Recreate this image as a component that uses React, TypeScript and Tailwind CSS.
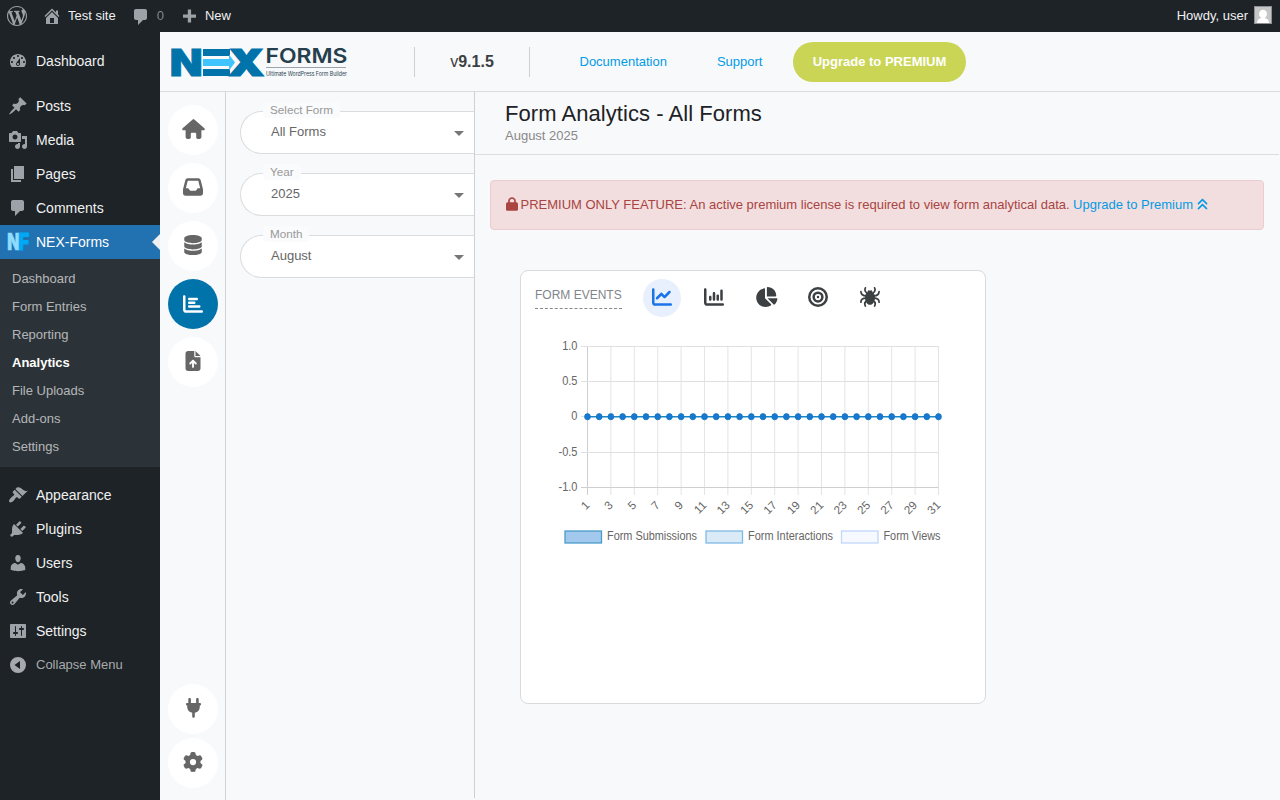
import React from 'react';
import {
  FaAnglesUp,
  FaBullseye,
  FaChartBar,
  FaChartColumn,
  FaChartLine,
  FaChartPie,
  FaDatabase,
  FaFileArrowUp,
  FaGear,
  FaInbox,
  FaLock,
} from 'react-icons/fa6';

const dash = {
  wordpress:
    'M20 10c0-5.51-4.49-10-10-10C4.48 0 0 4.49 0 10c0 5.52 4.48 10 10 10 5.51 0 10-4.48 10-10zM7.78 15.37L4.37 6.22c.55-.02 1.17-.08 1.17-.08.5-.06.44-1.13-.06-1.11 0 0-1.45.11-2.37.11-.18 0-.37 0-.58-.01C4.12 2.69 6.87 1.11 10 1.11c2.33 0 4.45.87 6.05 2.34-.68-.11-1.65.39-1.65 1.58 0 .74.45 1.36.9 2.1.35.61.55 1.36.55 2.46 0 1.49-1.4 5-1.4 5l-3.03-8.37c.54-.02.82-.17.82-.17.5-.05.44-1.25-.06-1.22 0 0-1.44.12-2.38.12-.87 0-2.33-.12-2.33-.12-.5-.03-.56 1.2-.06 1.22l.92.08 1.26 3.41zM17.41 10c.24-.64.74-1.87.43-4.25.7 1.29 1.05 2.71 1.05 4.25 0 3.29-1.73 6.24-4.4 7.78.97-2.59 1.94-5.2 2.92-7.78zM6.1 18.09C3.12 16.65 1.11 13.53 1.11 10c0-1.3.23-2.48.72-3.59C3.25 10.3 4.67 14.2 6.1 18.09zm4.03-6.63l2.58 6.98c-.86.29-1.76.45-2.71.45-.79 0-1.57-.11-2.29-.33.81-2.38 1.62-4.74 2.42-7.1z',
  home: 'M16 8.5l1.53 1.53-1.06 1.06L10 4.6l-6.47 6.49-1.06-1.06L10 2.5l4 4v-2h2v4zm-6-2.46l6 5.99V18H4v-5.97zM12 17v-5H8v5h4z',
  comments: 'M5 2h9c1.1 0 2 .9 2 2v7c0 1.1-.9 2-2 2h-2l-5 5v-5H5c-1.1 0-2-.9-2-2V4c0-1.1.9-2 2-2z',
  plus: 'M17 8.4v3.3h-4.9v4.9H8.8v-4.9H4V8.4h4.8V3.5h3.3v4.9H17z',
  dashboard:
    'M3.76 16h12.48c1.1-1.37 1.76-3.11 1.76-5 0-4.42-3.58-8-8-8s-8 3.58-8 8c0 1.89.66 3.63 1.76 5zM10 4c.55 0 1 .45 1 1s-.45 1-1 1-1-.45-1-1 .45-1 1-1zM6 6c.55 0 1 .45 1 1s-.45 1-1 1-1-.45-1-1 .45-1 1-1zm8 0c.55 0 1 .45 1 1s-.45 1-1 1-1-.45-1-1 .45-1 1-1zm-5.37 5.55L12 7v6c0 1.1-.9 2-2 2s-2-.9-2-2c0-.57.24-1.08.63-1.45zM4 10c.55 0 1 .45 1 1s-.45 1-1 1-1-.45-1-1 .45-1 1-1zm12 0c.55 0 1 .45 1 1s-.45 1-1 1-1-.45-1-1 .45-1 1-1zm-5 3c0-.55-.45-1-1-1s-1 .45-1 1 .45 1 1 1 1-.45 1-1z',
  post: 'M10.44 3.02l1.82-1.82 6.36 6.35-1.83 1.82c-1.05-.68-2.48-.57-3.41.36l-.75.75c-.92.93-1.04 2.35-.35 3.41l-1.83 1.82-2.41-2.41-2.8 2.79c-.42.42-3.38 2.71-3.8 2.29s1.86-3.39 2.28-3.81l2.79-2.79L4.1 9.36l1.83-1.82c1.05.69 2.48.57 3.4-.36l.75-.75c.93-.92 1.05-2.35.36-3.41z',
  media:
    'M13 11V4c0-.55-.45-1-1-1h-1.67L9 1H5L3.67 3H2c-.55 0-1 .45-1 1v7c0 .55.45 1 1 1h10c.55 0 1-.45 1-1zM7 4.5c1.38 0 2.5 1.12 2.5 2.5S8.38 9.5 7 9.5 4.5 8.38 4.5 7 5.62 4.5 7 4.5zM14 6h5v10.5c0 1.38-1.12 2.5-2.5 2.5S14 17.88 14 16.5s1.12-2.5 2.5-2.5c.17 0 .34.02.5.05V9h-3V6zm-4 8.05V13h2v3.5c0 1.38-1.12 2.5-2.5 2.5S7 17.88 7 16.5 8.12 14 9.5 14c.17 0 .34.02.5.05z',
  page: 'M6 15V2h10v13H6zm-1 1h8v2H3V5h2v11z',
  appearance:
    'M14.48 11.06L7.41 3.99l1.5-1.5c.5-.56 2.3-.47 3.51.32 1.21.8 1.43 1.28 2.91 2.1 1.18.64 2.45 1.26 4.45.85zm-.71.71L6.7 4.7 4.93 6.47c-.39.39-.39 1.02 0 1.41l1.06 1.06c.39.39.39 1.03 0 1.42-.6.6-1.43 1.11-2.21 1.69-.35.26-.7.53-1.01.84C1.43 14.23.4 16.08 1.4 17.07c.99 1 2.84-.03 4.18-1.36.31-.31.58-.66.85-1.02.57-.78 1.08-1.61 1.69-2.21.39-.39 1.02-.39 1.41 0l1.06 1.06c.39.39 1.02.39 1.41 0z',
  plugins:
    'M13.11 4.36L9.87 7.6 8 5.73l3.24-3.24c.35-.34 1.05-.2 1.56.32.52.51.66 1.21.31 1.55zm-8 1.77l.91-1.12 9.01 9.01-1.19.84c-.71.71-2.63 1.16-3.82 1.16H6.14L4.9 17.26c-.59.59-1.54.59-2.12 0-.59-.58-.59-1.53 0-2.12l1.24-1.24v-3.88c0-1.13.4-3.19 1.09-3.89zm7.26 3.97l3.24-3.24c.34-.35 1.04-.21 1.55.31.52.51.66 1.21.31 1.55l-3.24 3.25z',
  users:
    'M10 9.25c-2.27 0-2.73-3.44-2.73-3.44C7 4.02 7.82 2 9.97 2c2.16 0 2.98 2.02 2.71 3.81 0 0-.41 3.44-2.68 3.44zm0 2.57L12.72 10c2.39 0 4.52 2.33 4.52 4.53v2.49s-3.65 1.13-7.24 1.13c-3.65 0-7.24-1.13-7.24-1.13v-2.49c0-2.25 1.94-4.48 4.47-4.48z',
  tools:
    'M16.68 9.77c-1.34 1.34-3.3 1.67-4.95.99l-5.41 6.52c-.99.99-2.59.99-3.58 0s-.99-2.59 0-3.57l6.52-5.42c-.68-1.65-.35-3.61.99-4.95 1.28-1.28 3.12-1.62 4.72-1.06l-2.89 2.89 2.82 2.82 2.86-2.87c.53 1.58.18 3.39-1.08 4.65zM3.81 16.21c.4.39 1.04.39 1.43 0 .4-.4.4-1.04 0-1.43-.39-.4-1.03-.4-1.43 0-.39.39-.39 1.03 0 1.43z',
  settings:
    'M18 16V4c0-.55-.45-1-1-1H3c-.55 0-1 .45-1 1v12c0 .55.45 1 1 1h14c.55 0 1-.45 1-1zM8 11h1c.55 0 1 .45 1 1s-.45 1-1 1H8v1.5c0 .28-.22.5-.5.5s-.5-.22-.5-.5V13H6c-.55 0-1-.45-1-1s.45-1 1-1h1V5.5c0-.28.22-.5.5-.5s.5.22.5.5V11zm5-2h-1c-.55 0-1-.45-1-1s.45-1 1-1h1V5.5c0-.28.22-.5.5-.5s.5.22.5.5V7h1c.55 0 1 .45 1 1s-.45 1-1 1h-1v5.5c0 .28-.22.5-.5.5s-.5-.22-.5-.5V9z',
  collapse: 'M10 2a8 8 0 1 0 0 16 8 8 0 0 0 0-16zm2 4v8l-5.500-4z',
};

type DashName = keyof typeof dash;

const Dashicon: React.FC<{ name: DashName; className?: string }> = ({ name, className = '' }) => (
  <svg viewBox="0 0 20 20" className={`w-5 h-5 shrink-0 ${className}`} fill="currentColor">
    <path fillRule="evenodd" d={dash[name]} />
  </svg>
);

const House = () => (
  <svg viewBox="0 0 23 20" className="w-[23px] h-5" fill="currentColor">
    <path d="M10.700.4a1.200 1.200 0 0 1 1.600 0l10.100 8.900c.8.8.3 2-.8 2h-2.200v6.800c0 1.100-.8 1.900-1.900 1.900h-1.600c-1 0-1.700-.7-1.700-1.700v-3.200c0-.8-.5-1.300-1.300-1.300h-2.800c-.8 0-1.300.5-1.300 1.300v3.200c0 1-.7 1.700-1.700 1.700H5.500c-1.100 0-1.900-.8-1.900-1.900v-6.800H1.400c-1.100 0-1.600-1.200-.8-2z" />
  </svg>
);

const Plug = () => (
  <svg viewBox="0 0 15 20" className="w-[15px] h-5" fill="currentColor">
    <path d="M2.300 5V1.200a1.300 1.300 0 0 1 2.600 0V5zM10.100 5V1.200a1.300 1.300 0 0 1 2.600 0V5z" />
    <rect y="5" width="15" height="2.400" rx="1" />
    <path d="M1.200 7h12.600v1.700a6.300 6.300 0 0 1-5 6.100v3.600a1.300 1.300 0 0 1-2.600 0v-3.600a6.300 6.300 0 0 1-5-6.100z" />
  </svg>
);

const Spider: React.FC<{ className?: string }> = ({ className = '' }) => (
  <svg viewBox="0 0 20 20" className={className} fill="none" stroke="currentColor" strokeWidth="1.700" strokeLinecap="round">
    <path
      d="M10 3.600c.7 0 1-.6 1.700-.2.7.4.9 1.300.9 2.200 1.700.9 2.500 2.600 2.500 4.600 0 3.900-2.100 7.600-5.100 7.600s-5.100-3.700-5.100-7.600c0-2 .8-3.700 2.500-4.600 0-.9.2-1.800.9-2.200.7-.4 1 .2 1.700.2z"
      fill="currentColor"
      stroke="none"
    />
    <path d="M5.400.9c-1.100 2.500-.3 4.400 2.300 5.900M14.600.9c1.100 2.500.3 4.400-2.300 5.900" />
    <path d="M.9 4.600c.2 2.900 2 4.200 5.300 4.400M19.100 4.600c-.2 2.900-2 4.200-5.300 4.400" />
    <path d="M.9 15.200c0-2.800 2-4 5.300-4M19.100 15.200c0-2.800-2-4-5.300-4" />
    <path d="M5.400 19.100c-1.300-2.300-.7-4.200 1.900-5.900M14.600 19.100c1.300-2.300.7-4.200-1.900-5.900" />
  </svg>
);

const AdminBar = () => (
  <header className="flex h-8 items-center bg-[#1d2327] text-[13px] text-[#f0f0f1] shrink-0">
    <Dashicon name="wordpress" className="ml-[7px] text-[#9ca2a7]" />
    <Dashicon name="home" className="ml-[15px] text-[#9ca2a7]" />
    <span className="ml-1.5">Test site</span>
    <Dashicon name="comments" className="ml-[15px] mt-0.5 text-[#9ca2a7]" />
    <span className="ml-1.5 text-[#9ca2a7]/80">0</span>
    <Dashicon name="plus" className="ml-[15px] text-[#9ca2a7]" />
    <span className="ml-1.5">New</span>
    <span className="ml-auto">Howdy, user</span>
    <svg viewBox="0 0 18 18" className="ml-1.5 mr-2 w-[18px] h-[18px] mb-0.5">
      <rect x="0.5" y="0.5" width="17" height="17" fill="#c6c6c6" stroke="#8c8f94" />
      <ellipse cx="9" cy="8" rx="4" ry="4.300" fill="#fff" />
      <path d="M3 17c0-3 2-4.500 4.500-5h3c2.500.5 4.500 2 4.500 5z" fill="#fff" />
    </svg>
  </header>
);

const MenuItem: React.FC<{ icon: DashName; label: string }> = ({ icon, label }) => (
  <div className="flex h-[34px] items-center gap-2 pl-2 text-sm text-[#f0f0f1]">
    <Dashicon name={icon} className="text-[#9ca2a7]" />
    {label}
  </div>
);

const submenu = ['Dashboard', 'Form Entries', 'Reporting', 'Analytics', 'File Uploads', 'Add-ons', 'Settings'];

const Sidebar = () => (
  <nav className="w-40 shrink-0 bg-[#1d2327] pt-3">
    <MenuItem icon="dashboard" label="Dashboard" />
    <div className="h-[11px]" />
    <MenuItem icon="post" label="Posts" />
    <MenuItem icon="media" label="Media" />
    <MenuItem icon="page" label="Pages" />
    <MenuItem icon="comments" label="Comments" />
    <div className="relative flex h-[34px] items-center bg-[#2271b1] pl-2 text-sm text-white">
      <svg
        viewBox="0 0 22 34"
        className="w-[22px] h-[34px] shrink-0 mr-1.5 overflow-visible font-['Inter','Liberation_Sans',sans-serif] font-black"
      >
        <text fontSize="22.500" fill="#8fdcff" stroke="#8fdcff" strokeWidth="0.6" transform="translate(-0.8 24.600) scale(0.72 1)">N</text>
        <text fontSize="22.500" fill="#00a8f5" stroke="#00a8f5" strokeWidth="1" transform="translate(10.200 24.600) scale(0.84 1)">F</text>
      </svg>
      NEX-Forms
      <div className="absolute right-0 top-[9px] border-y-8 border-r-8 border-y-transparent border-r-[#f0f0f1]" />
    </div>
    <ul className="bg-[#2c3338] py-1.5 text-[13px]">
      {submenu.map((s) => (
        <li
          key={s}
          className={`flex h-7 items-center pl-3 ${s === 'Analytics' ? 'font-bold text-white' : 'text-[#f0f0f1]/70'}`}
        >
          {s}
        </li>
      ))}
    </ul>
    <div className="h-[11px]" />
    <MenuItem icon="appearance" label="Appearance" />
    <MenuItem icon="plugins" label="Plugins" />
    <MenuItem icon="users" label="Users" />
    <MenuItem icon="tools" label="Tools" />
    <MenuItem icon="settings" label="Settings" />
    <div className="flex h-[34px] items-center gap-2 pl-2 text-[13px] text-[#a7aaad]">
      <Dashicon name="collapse" />
      Collapse Menu
    </div>
  </nav>
);

const Logo = () => (
  <svg viewBox="0 -12 178 55" className="w-[178px] h-[55px] shrink-0 overflow-visible">
    <g className="font-['Inter','Liberation_Sans',sans-serif] font-black" fill="#0073aa" stroke="#0073aa">
      <text fontSize="36.500" strokeWidth="0.9" transform="translate(-1.200 29.500) scale(1.17 1)">N</text>
      <text fontSize="36.500" strokeWidth="1.200" transform="translate(57.200 29.500) scale(1.26 1)">X</text>
    </g>
    <rect x="32" y="3" width="27" height="7" fill="#0073aa" />
    <rect x="32" y="23" width="27" height="7" fill="#0073aa" />
    <path d="M32 13h26V8.500l6 8-6 8V20H32z" fill="#40c4ff" />
    <text
      x="94.500"
      y="17"
      fontSize="19.800"
      textLength="82"
      lengthAdjust="spacingAndGlyphs"
      fill="#263f4d"
      className="font-['Inter','Liberation_Sans',sans-serif] font-semibold"
    >
      FORMS
    </text>
    <rect x="95" y="21" width="80" height="1" fill="#9aa4aa" />
    <text
      x="95"
      y="29.500"
      fontSize="5.800"
      textLength="81"
      lengthAdjust="spacingAndGlyphs"
      fill="#263f4d"
      className="font-['Inter','Liberation_Sans',sans-serif]"
    >
      Ultimate WordPress Form Builder
    </text>
  </svg>
);

const TopBar = () => (
  <div className="flex h-[60px] items-center border-b border-[#d9dbdd] pl-[11px] text-[13px] shrink-0">
    <Logo />
    <div className="ml-[65px] flex h-[30px] w-[116px] items-center justify-center border-x border-[#ced1d4] text-base text-[#3c4043]">
      v<strong>9.1.5</strong>
    </div>
    <a className="ml-[49.500px] text-[#039be5]">Documentation</a>
    <a className="ml-[50px] text-[#039be5]">Support</a>
    <button className="ml-[30px] h-10 w-[173px] rounded-full bg-[#cad556] pl-px font-bold text-white">Upgrade to PREMIUM</button>
  </div>
);

const RailButton: React.FC<{ children: React.ReactNode; active?: boolean }> = ({ children, active }) => (
  <div
    className={`flex h-[50px] w-[50px] items-center justify-center rounded-full text-xl ${
      active ? 'bg-[#0073aa] text-white' : 'bg-white pb-0.5 text-[#666]'
    }`}
  >
    {children}
  </div>
);

const Rail = () => (
  <div className="flex w-[66px] flex-col gap-2 border-r border-[#d0d3d6] pl-2 pt-[13px] pb-3 shrink-0">
    <RailButton><House /></RailButton>
    <RailButton><FaInbox /></RailButton>
    <RailButton><FaDatabase /></RailButton>
    <RailButton active><FaChartBar /></RailButton>
    <RailButton><FaFileArrowUp /></RailButton>
    <div className="mt-auto flex flex-col gap-1">
      <RailButton><Plug /></RailButton>
      <RailButton><FaGear /></RailButton>
    </div>
  </div>
);

const Select: React.FC<{ label: string; value: string }> = ({ label, value }) => (
  <div className="relative flex h-[43px] items-center justify-between rounded-l-full border border-r-0 border-[#dadcde] bg-white pl-[30px] pr-2.5 text-[13px] text-[#666]">
    <span className="absolute left-[22px] -top-2.5 rounded bg-[#fafbfc] px-[7px] text-[11.700px] leading-4 text-[#999]">
      {label}
    </span>
    <span className="pb-0.5">{value}</span>
    <span className="mt-px border-x-5 border-t-5 border-x-transparent border-t-[#777]" />
  </div>
);

const Filters = () => (
  <div className="mb-0.5 flex w-[249px] flex-col gap-[19px] border-r border-[#ced1d4] pl-3.5 pt-[19px] shrink-0">
    <Select label="Select Form" value="All Forms" />
    <Select label="Year" value="2025" />
    <Select label="Month" value="August" />
  </div>
);

const yTicks = [
  { y: 16.5, label: '1.0' },
  { y: 51.5, label: '0.5' },
  { y: 86.5, label: '0' },
  { y: 122.5, label: '-0.5' },
  { y: 157.5, label: '-1.0' },
];

const legend = [
  { x: 45, label: 'Form Submissions', width: 90, fill: '#a3c8ed', stroke: '#4a9cca' },
  { x: 186, label: 'Form Interactions', width: 85, fill: '#daeaf6', stroke: '#7fb9e6' },
  { x: 321.5, label: 'Form Views', width: 57, fill: '#f6f9ff', stroke: '#c2d8fb' },
];

const X0 = 67.5;
const STEP = 11.7;
const days = Array.from({ length: 31 }, (_, i) => i + 1);

const EventsChart = () => (
  <svg viewBox="0 0 440 230" className="w-[440px] h-[230px]" fontSize="12" fill="#666">
    {days.filter((d) => d % 2 === 1).map((d) => {
      const x = X0 + (d - 1) * STEP;
      return (
        <g key={d}>
          <line x1={x} x2={x} y1="16" y2="165" stroke={d === 1 ? '#cfcfcf' : '#e4e4e4'} />
          <text textAnchor="end" transform={`translate(${x + 2.8} 175.800) rotate(-45)`} fontSize="11.700">{d}</text>
        </g>
      );
    })}
    {yTicks.map((t) => (
      <g key={t.label}>
        <line x1="61" x2="418.500" y1={t.y} y2={t.y} stroke={t.label === '-1.0' ? '#cfcfcf' : '#e0e0e0'} />
        <text textAnchor="end" transform={`translate(57.500 ${t.y + 3.500}) scale(0.92 1)`}>{t.label}</text>
      </g>
    ))}
    <line x1={X0} x2="418.500" y1="86.700" y2="86.700" stroke="#1a86c4" strokeWidth="1.500" />
    {days.map((d) => (
      <ellipse key={d} cx={X0 + (d - 1) * STEP} cy="86.700" rx="2.900" ry="3.100" fill="#1976d2" stroke="#0f77bd" strokeWidth="0.8" />
    ))}
    {legend.map((l) => (
      <g key={l.label}>
        <rect x={l.x} y="201" width="36.500" height="12" fill={l.fill} stroke={l.stroke} strokeWidth="1.300" />
        <text x={l.x + 42} y="210.300" textLength={l.width} lengthAdjust="spacingAndGlyphs">{l.label}</text>
      </g>
    ))}
  </svg>
);

// the pie glyph is wider than it is tall
const chartTypes = [
  { Icon: FaChartLine, size: 'h-5 w-5' },
  { Icon: FaChartColumn, size: 'h-5 w-5' },
  { Icon: FaChartPie, size: 'h-5 w-[22.5px] ml-[1.5px]' },
  { Icon: FaBullseye, size: 'h-5 w-5' },
  { Icon: Spider, size: 'h-5 w-5' },
];

const Analytics = () => (
  <main className="flex-1 min-w-0">
    <div className="mr-px h-[63px] border-b border-[#dadcde] pl-[30px] pt-1.5">
      <h1 className="text-[22px] leading-8 tracking-[0.055px] text-[#202124]">Form Analytics - All Forms</h1>
      <p className="text-[13px] leading-3 text-[#888]">August 2025</p>
    </div>
    <div className="ml-[15px] mr-4 mt-[25px] flex h-[50px] items-center rounded border border-[#ebccd1] bg-[#f2dede] pl-[15px] text-[13px] text-[#a94442]">
      <FaLock className="mr-[2.5px] mb-0.5 h-3.5 w-3 shrink-0" />
      <span>PREMIUM ONLY FEATURE: An active premium license is required to view form analytical data.</span>
      <a className="ml-[3.5px] flex items-center gap-[3px] text-[#039be5]">
        Upgrade to Premium <FaAnglesUp className="mb-0.5 text-[13px]" />
      </a>
    </div>
    <section className="ml-[45px] mt-10 h-[434px] w-[466px] rounded-lg border border-[#d8dade] bg-white">
      <div className="flex items-center pl-3.5 pt-2">
        <span className="mb-px mr-[21px] border-b border-dashed border-[#888] pb-1 text-xs leading-[18px] text-[#80868b]">FORM EVENTS</span>
        <div className="flex gap-3.5">
          {chartTypes.map(({ Icon, size }, i) => (
            <button
              key={i}
              className={`flex h-[38px] w-[38px] items-center justify-center rounded-full pb-0.5 ${
                i === 0 ? 'bg-[#e8f0fe] text-[#1a73e8]' : 'text-[#3c4043]'
              }`}
            >
              <Icon className={size} />
            </button>
          ))}
        </div>
      </div>
      <div className="-ml-px pt-[13px]">
        <EventsChart />
      </div>
    </section>
  </main>
);

export default function App() {
  return (
    <div className="flex h-screen flex-col overflow-hidden bg-[#f8f9fb] font-['Liberation_Sans',Arial,sans-serif]">
      <AdminBar />
      <div className="flex flex-1 min-h-0">
        <Sidebar />
        <div className="flex flex-1 min-w-0 flex-col">
          <TopBar />
          <div className="flex flex-1 min-h-0">
            <Rail />
            <Filters />
            <Analytics />
          </div>
        </div>
      </div>
    </div>
  );
}
